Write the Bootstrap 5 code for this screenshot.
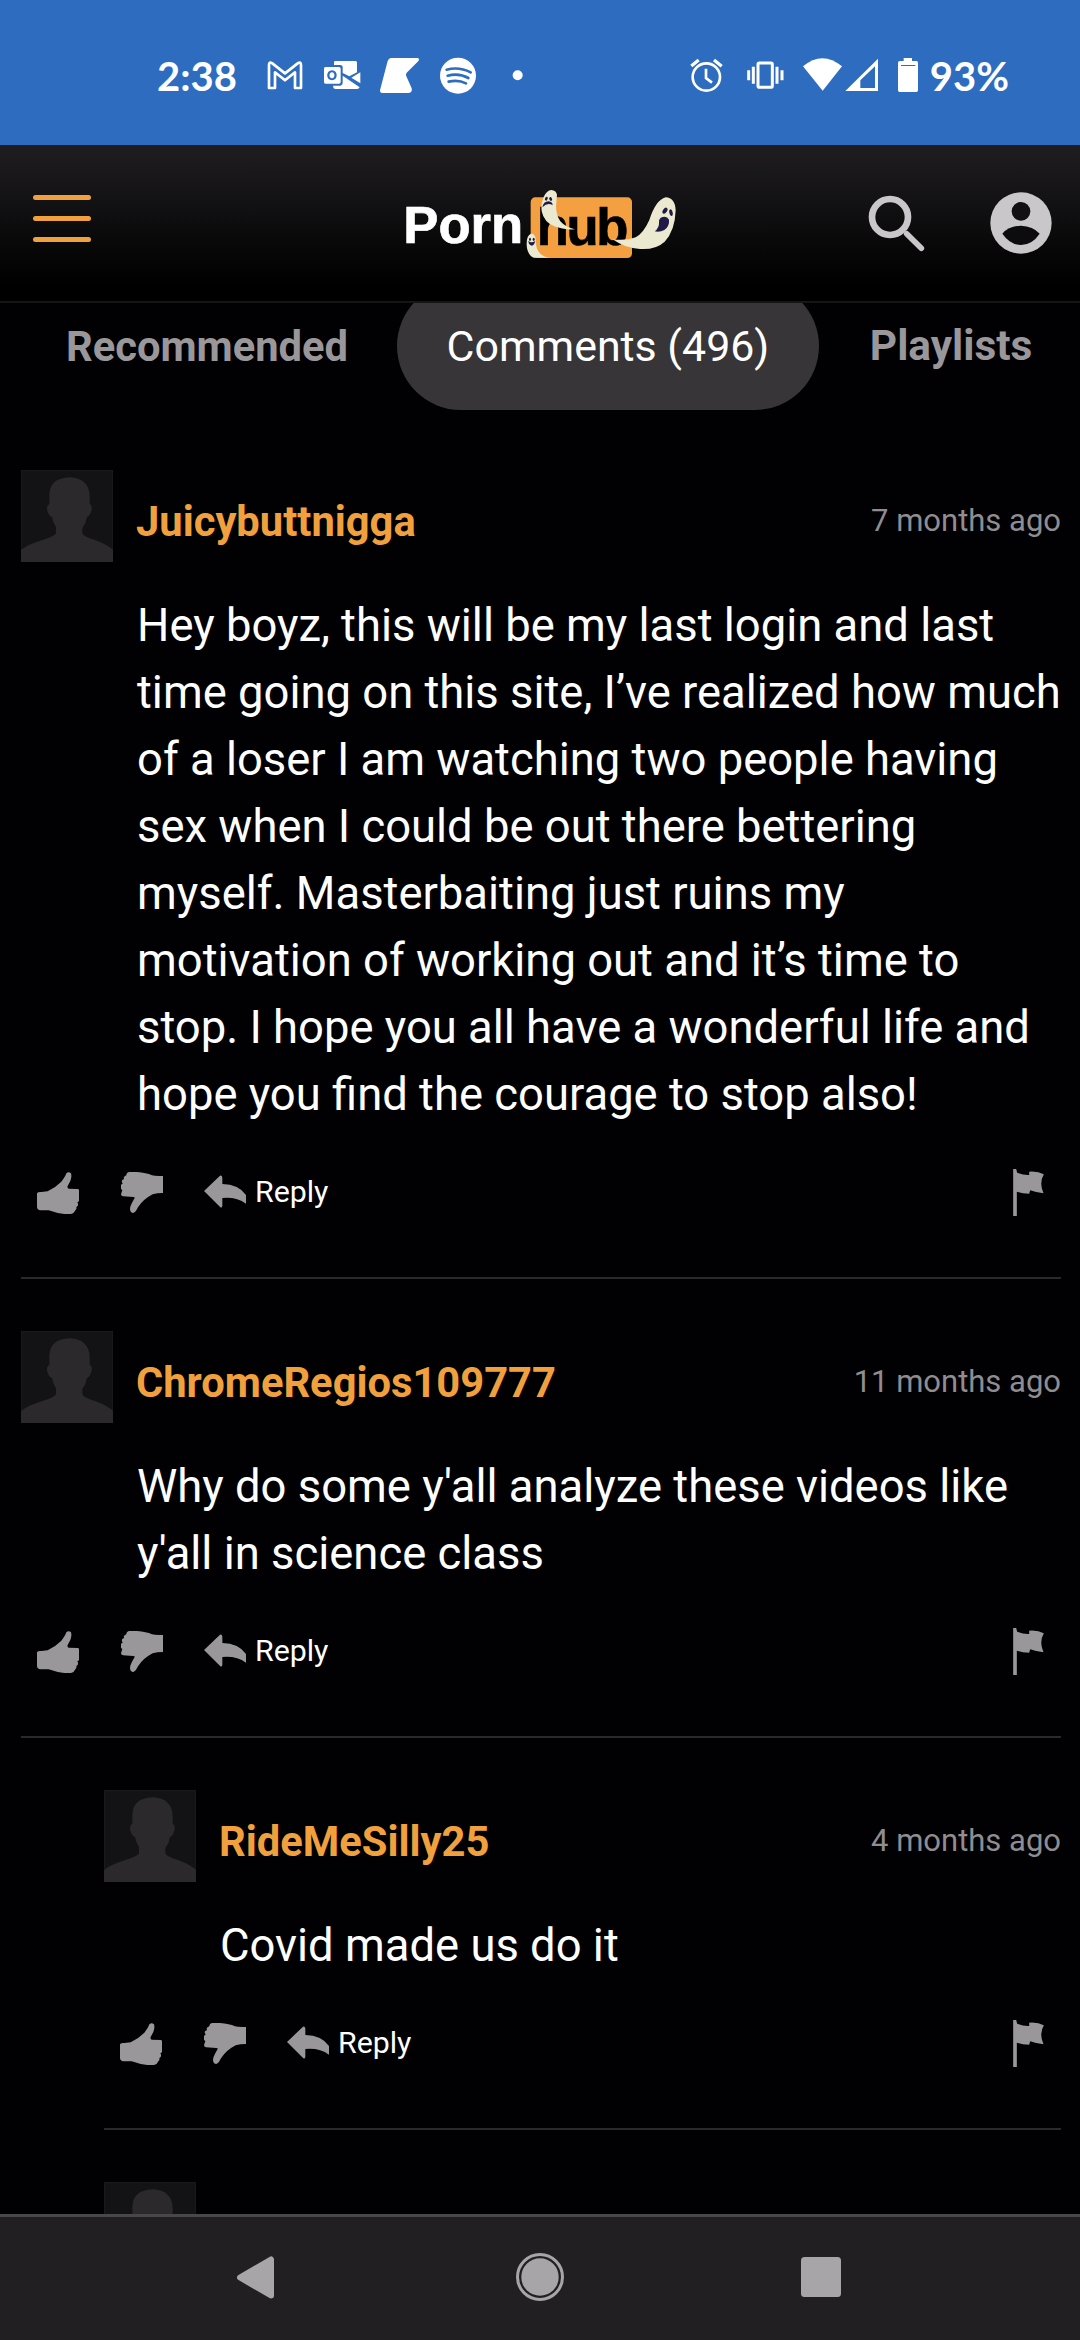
<!DOCTYPE html>
<html lang="en">
<head>
<meta charset="utf-8">
<meta name="viewport" content="width=device-width, initial-scale=1">
<title>Comments</title>
<link href="https://cdn.jsdelivr.net/npm/bootstrap@5.3.0/dist/css/bootstrap.min.css" rel="stylesheet">
<style>
body{background:#010002;color:#fff;font-family:Roboto,sans-serif;height:2340px;overflow:hidden}
svg{display:block;flex:none}
.screen{width:1080px;height:2340px}
.statusbar{height:145px;padding:7px 71px 0 157px;background:#2e6cc0;font:700 40px Lato,sans-serif;line-height:1}
.clock{width:91px}
.charge{margin-left:-5px}
.left-icons{gap:17px}
.right-icons{gap:15px}
.topbar{height:158px;background:linear-gradient(#1f1d20,#000 90%);border-bottom:2px solid #151417;padding-left:33px;z-index:2}
.burger{width:58px;gap:16px;margin-top:-10px}
.burger i{height:5px;border-radius:3px;background:#f0a03c}
.logo{margin-left:289px;margin-top:-6px}
.find{margin-left:168px}
.user{margin-left:65px}
.tabs{margin-top:-21px;height:128px;padding-left:17px;font-size:41.7px;line-height:1;color:#99979a}
.tabs a{color:inherit;text-decoration:none;height:128px;padding:1px 49px 0;border-radius:64px;font-weight:700;white-space:nowrap}
.tabs a.on{background:#373538;color:#fff;font-weight:400;font-size:42.9px;padding:1px 50px 0 49.5px}
.tabs a:last-child{font-size:42.4px;padding-left:50.5px}
.feed{padding:60px 19px 0 21px;height:1804px}
.post{border-bottom:2px solid #2b292c;margin-bottom:52px}
.post.inner{margin-left:83px}
.who{font-size:41.7px;font-weight:700;color:#f0a03c;line-height:92px;padding-top:6px;height:92px;margin-left:23px}
.when{font-size:31px;color:#8f8d90;line-height:92px;padding-top:5px;height:92px}
.said{font-size:45.4px;line-height:67px;margin:29.5px 0 0 116px;white-space:nowrap}
.acts{height:149.5px;padding:1px 17px 20px 16px}
.acts .ico{width:42px;height:42px}
.thumbs{gap:41.5px}
.acts span{font-size:30.3px;line-height:40px;margin:-2px 0 0 9px}
.navbtm{height:126px;border-top:3px solid #49474a;background:#211f22;padding:0 239px 3px 237px}
.navbtm .home{margin-left:5px}
</style>
<script src="https://cdn.jsdelivr.net/npm/bootstrap@5.3.0/dist/js/bootstrap.bundle.min.js"></script>
</head>
<body>
<svg width="0" height="0" class="position-absolute">
<symbol id="face" viewBox="0 0 276 276"><rect width="276" height="276" fill="#131215"/><path d="M1.500 275V1.500H274.500V275" fill="none" stroke="#19181b" stroke-width="4"/><path d="M0 276V240Q20 224 62 211Q102 199 105 190V172Q96 158 93 141Q82 138 78 118Q77 106 85 102V76Q86 24 146 22Q204 25 206 78V102Q214 105 212 118Q208 138 198 141Q196 158 184 174V190Q187 200 222 210Q262 225 276 240V276Z" fill="#2b292c"/></symbol>
<symbol id="up" viewBox="111 126 126 126"><path d="M111 190Q114 185 124 186L143 184Q166 173 184 155Q196 140 199 130Q206 123 213 130Q216 140 211 153L203 168Q201 174 206 176L233 177Q238 177 237 183V212Q236 215 232 217Q236 222 233 228L229 231Q231 237 226 241Q223 250 213 252H193Q170 250 146 241L121 241Q112 240 111 232Z" fill="#99979a"/></symbol>
<symbol id="down" viewBox="360 126 126 126"><path d="M486 138V189Q468 189 455 193Q426 208 411 232Q404 247 397 249Q388 249 387 238Q387 228 396 213L401 204Q402 201 397 201L366 199Q360 198 360 193L364 180L360 177V164L365 161Q361 156 363 151L369 147Q366 141 372 138L376 136Q376 127 386 126H408Q436 128 453 136Q462 139 486 138Z" fill="#99979a"/></symbol>
<symbol id="rep" viewBox="612 125 126 126"><path d="M612 182L660 136Q666 134 667 142V161Q716 162 738 194V220Q709 199 667 203V227Q666 233 661 231Z" fill="#99979a"/></symbol>
<symbol id="flag" viewBox="516 120 92 141"><path d="M516 120H525L528 131Q548 139 564 138V128Q590 126 608 136Q593 162 607 193Q590 192 567 184L564 194Q545 194 527 188V261H516Z" fill="#99979a"/></symbol>
</svg>
<div class="screen d-flex flex-column overflow-hidden">
<div class="statusbar d-flex align-items-center justify-content-between">
<div class="left-icons d-flex align-items-center">
<span class="clock">2:38</span>
<svg width="40" height="40" viewBox="405 48 120 120"><path d="M417 144V75Q417 63 427 70L465 100L503 70Q513 63 513 75V144H495V97L465 121L435 97V144Z" fill="none" stroke="#fff" stroke-width="8" stroke-linejoin="round"/></svg>
<svg width="40" height="40" viewBox="579 48 120 120"><path d="M615 72V66Q615 63 620 63H680Q684 63 684 68V97L661 109L641 99V80Q640 75 634 75H615ZM694 97V130L667 113ZM641 107L692 142Q690 147 684 147H618Q612 146 612 137H634Q641 136 641 129Z" fill="#fff"/><path fill-rule="evenodd" d="M589 81H630Q635 81 635 86V126Q635 131 630 131H589Q585 131 585 126V86Q585 81 589 81ZM609 91C590 91 590 121 609 121S628 91 609 91ZM609 97C619 97 619 115 609 115S599 97 609 97Z" fill="#fff"/></svg>
<svg width="42" height="40" viewBox="750 48 126 120"><path d="M785 54H867Q872 56 869 62L833 98Q829 103 832 109L848 145Q851 157 839 159H758Q752 158 753 151L776 63Q779 55 785 54Z" fill="#fff"/></svg>
<svg width="40" height="40" viewBox="927 48 120 120"><circle cx="987" cy="107" r="54" fill="#fff"/><path d="M953 89Q990 79 1025 97M956 107Q990 98 1018 114M959 125Q988 118 1011 130" fill="none" stroke="#2e6cc0" stroke-width="8" stroke-linecap="round"/></svg>
<svg class="ms-3" width="14" height="40" viewBox="1143 48 42 120"><circle cx="1163" cy="106" r="15" fill="#fff"/></svg>
</div>
<div class="right-icons d-flex align-items-center">
<svg class="me-1" width="40" height="40" viewBox="75 48 120 120"><g fill="none" stroke="#fff" stroke-width="8"><circle cx="133" cy="111" r="41"/><path d="M132 86V114L150 128"/><path d="M88 78L110 60M156 60L179 79" stroke-width="10"/></g></svg>
<svg width="40" height="40" viewBox="255 48 120 120"><rect x="291" y="69" width="43" height="73" rx="4" fill="none" stroke="#fff" stroke-width="9"/><path d="M277 80V131M263 91V121M348 80V131M363 91V121" stroke="#fff" stroke-width="9"/></svg>
<svg width="80" height="40" viewBox="420 48 240 120"><path d="M426 79Q484 30 543 79L485 152Z" fill="#fff"/><path fill-rule="evenodd" d="M553 153L651 56V153ZM598 144H642V79L598 121Z" fill="#fff"/></svg>
<svg width="24" height="40" viewBox="702 48 72 120"><path fill-rule="evenodd" d="M725 54H750V63H763Q768 63 768 68V151Q768 156 763 156H713Q708 156 708 151V68Q708 63 713 63H725ZM717 75V78H760V75Z" fill="#fff"/></svg>
<span class="charge">93%</span>
</div>
</div>
<div class="topbar d-flex align-items-center position-relative">
<div class="burger d-flex flex-column"><i></i><i></i><i></i></div>
<svg class="logo" width="320" height="120" viewBox="0 0 960 360"><g font-family="Liberation Sans, sans-serif" font-weight="700" font-size="158"><text x="70" y="249" fill="#fff" stroke="#fff" stroke-width="2">Porn</text><rect x="452" y="112" width="304" height="182" rx="14" fill="#f5a040"/><text x="470" y="254" fill="#000" stroke="#000" stroke-width="2" textLength="275">hub</text></g><g fill="#ebe9d0"><path d="M531 104Q528 91 514 90Q500 91 491 111Q482 133 485 154Q492 187 523 199Q550 210 585 208Q557 202 541 184Q529 168 528 139Z"/><path d="M510 293Q484 290 475 274Q466 259 467 235Q464 220 453 221Q439 226 440 255Q441 281 457 291Q462 294 510 293Z"/><path d="M698 238Q740 243 767 232Q790 220 808 180Q827 120 857 112Q885 113 887 151Q885 213 854 245Q827 270 780 267Q735 265 698 238Z"/></g><g fill="#201b46"><ellipse cx="499" cy="116" rx="4" ry="6" transform="rotate(20 499 116)"/><ellipse cx="512" cy="117" rx="4" ry="6" transform="rotate(-25 512 117)"/><path d="M487 142Q490 124 506 124Q518 126 518 136Q504 126 487 142Z"/><ellipse cx="450" cy="238" rx="3" ry="5"/><ellipse cx="461" cy="238" rx="3" ry="5"/><path d="M445 243Q455 251 465 243Q464 256 455 257Q446 255 445 243Z"/><ellipse cx="855" cy="152" rx="6" ry="10" transform="rotate(35 855 152)"/><ellipse cx="873" cy="158" rx="5" ry="10" transform="rotate(-12 873 158)"/><path d="M842 173Q860 165 867 179Q869 198 853 210Q840 217 824 214Q838 203 837 188Q836 178 842 173Z"/></g></svg>
<svg class="find" width="57" height="57" viewBox="84 105 171 171" fill="none" stroke="#c9c7ca"><circle cx="150" cy="171" r="54" stroke-width="20"/><path d="M200 221L244 265" stroke-width="17" stroke-linecap="round"/></svg>
<svg class="user" width="62" height="62" viewBox="448 98 186 186"><circle cx="541" cy="191" r="92" fill="#c9c7ca"/><circle cx="541" cy="156" r="28" fill="#111013"/><path d="M485 223Q505 200 541 199Q577 200 597 223Q575 256 541 257Q508 256 485 223Z" fill="#0c0b0e"/></svg>
</div>
<nav class="tabs d-flex">
<a class="d-flex align-items-center" href="#">Recommended</a>
<a class="d-flex align-items-center on" href="#">Comments (496)</a>
<a class="d-flex align-items-center" href="#">Playlists</a>
</nav>
<main class="feed overflow-hidden">
<article class="post">
<div class="d-flex"><svg width="92" height="92"><use href="#face"/></svg><div class="who">Juicybuttnigga</div><div class="when ms-auto">7 months ago</div></div>
<p class="said">Hey boyz, this will be my last login and last<br>time going on this site, I’ve realized how much<br>of a loser I am watching two people having<br>sex when I could be out there bettering<br>myself. Masterbaiting just ruins my<br>motivation of working out and it’s time to<br>stop. I hope you all have a wonderful life and<br>hope you find the courage to stop also!</p>
<div class="acts d-flex align-items-center"><div class="thumbs d-flex"><svg class="ico"><use href="#up"/></svg><svg class="ico"><use href="#down"/></svg><svg class="ico"><use href="#rep"/></svg></div><span>Reply</span><svg class="ms-auto" width="31" height="47"><use href="#flag"/></svg></div>
</article>
<article class="post">
<div class="d-flex"><svg width="92" height="92"><use href="#face"/></svg><div class="who">ChromeRegios109777</div><div class="when ms-auto">11 months ago</div></div>
<p class="said">Why do some y'all analyze these videos like<br>y'all in science class</p>
<div class="acts d-flex align-items-center"><div class="thumbs d-flex"><svg class="ico"><use href="#up"/></svg><svg class="ico"><use href="#down"/></svg><svg class="ico"><use href="#rep"/></svg></div><span>Reply</span><svg class="ms-auto" width="31" height="47"><use href="#flag"/></svg></div>
</article>
<article class="post inner">
<div class="d-flex"><svg width="92" height="92"><use href="#face"/></svg><div class="who">RideMeSilly25</div><div class="when ms-auto">4 months ago</div></div>
<p class="said">Covid made us do it</p>
<div class="acts d-flex align-items-center"><div class="thumbs d-flex"><svg class="ico"><use href="#up"/></svg><svg class="ico"><use href="#down"/></svg><svg class="ico"><use href="#rep"/></svg></div><span>Reply</span><svg class="ms-auto" width="31" height="47"><use href="#flag"/></svg></div>
</article>
<article class="post inner"><svg width="92" height="92"><use href="#face"/></svg></article>
</main>
<div class="navbtm d-flex align-items-center justify-content-between">
<svg width="37" height="43" viewBox="0 0 37 43"><path d="M3 21.500L34 3.500V39.500Z" fill="#a7a5a8" stroke="#a7a5a8" stroke-width="6" stroke-linejoin="round"/></svg>
<svg class="home" width="48" height="48" viewBox="0 0 48 48"><circle cx="24" cy="24" r="22.500" fill="none" stroke="#a7a5a8" stroke-width="3"/><circle cx="24" cy="24" r="18.700" fill="#a7a5a8"/></svg>
<svg width="40" height="40" viewBox="0 0 40 40"><rect width="40" height="40" rx="3.500" fill="#a7a5a8"/></svg>
</div>
</div>
</body>
</html>
